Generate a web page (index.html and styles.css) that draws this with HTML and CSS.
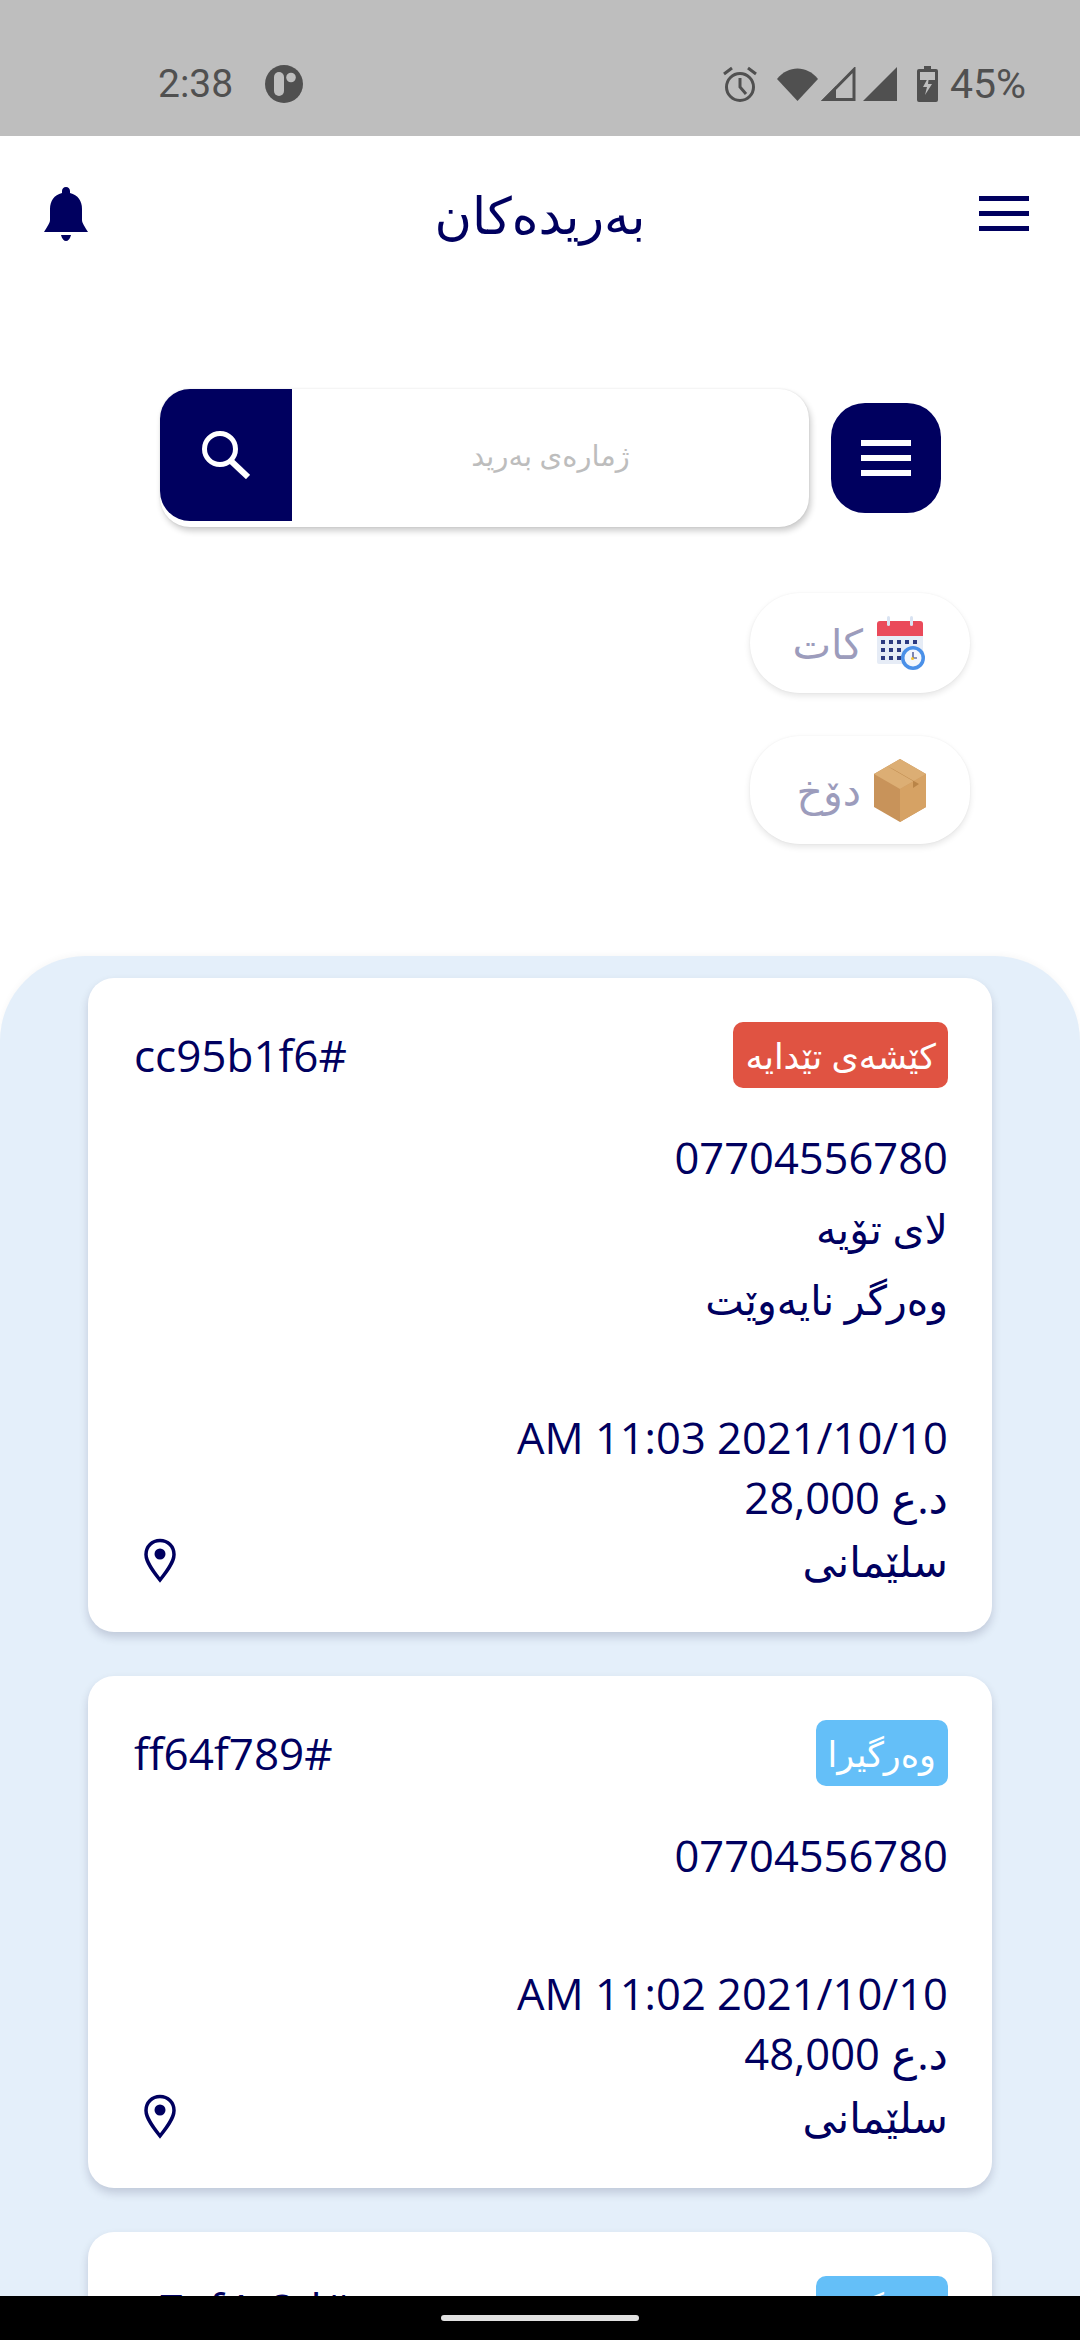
FILE: index.html
```html
<!DOCTYPE html>
<html lang="ckb" dir="rtl">

<head>
  <meta charset="UTF-8">
  <meta name="viewport" content="width=device-width, initial-scale=1.0">
  <title>بەریدەکان</title>
  <link rel="stylesheet" href="styles.css">
</head>

<body>

  <!-- android status bar, always laid out left to right -->
  <div class="status-bar" dir="ltr">
    <div class="status-left">
      <span>2:38</span>
      <svg class="status-logo" viewBox="0 0 38 38">
        <circle cx="19" cy="19" r="19" fill="#505050" />
        <rect x="9" y="7" width="10" height="24" rx="5" fill="#bebebe" />
        <circle cx="26" cy="12.5" r="4.8" fill="#bebebe" />
      </svg>
    </div>
    <div class="status-right">
      <svg class="icon-alarm" viewBox="0 0 34 36" fill="none" stroke="#505050" stroke-width="3">
        <circle cx="17" cy="21" r="13.5" />
        <path d="M17 12v9l6 7" />
        <path d="M1 8l8-6M33 8l-8-6" />
      </svg>
      <svg class="icon-wifi" viewBox="0 0 41 33">
        <path d="M0 11C11 -3 30 -3 41 11L20.500 33z" fill="#505050" />
      </svg>
      <svg class="icon-signal" viewBox="0 0 35 34">
        <path d="M33 2.500V32.500H3.500z" fill="none" stroke="#505050" stroke-width="3" />
        <path d="M0 34L15 19v15z" fill="#505050" />
      </svg>
      <svg class="icon-signal second" viewBox="0 0 35 34">
        <path d="M34 0V34H0z" fill="#505050" />
      </svg>
      <svg class="icon-battery" viewBox="0 0 21 36">
        <path d="M7 0h7v3h5a2 2 0 0 1 2 2v29a2 2 0 0 1-2 2H2a2 2 0 0 1-2-2V5a2 2 0 0 1 2-2h5z" fill="#505050" />
        <path d="M3 6h15v26H3z" fill="#bebebe" />
        <path d="M3 14h15v18H3z" fill="#505050" />
        <path d="M12 10L6 21h4l-2 8 7-11h-4z" fill="#bebebe" />
      </svg>
      <span class="battery-text">45%</span>
    </div>
  </div>

  <header class="top-bar">
    <svg class="menu-icon" viewBox="0 0 50 36" fill="#00005f">
      <rect width="50" height="5" />
      <rect y="15" width="50" height="5" />
      <rect y="30" width="50" height="5" />
    </svg>
    <h1>بەریدەکان</h1>
    <svg class="bell-icon" viewBox="0 0 44 54" fill="#00005f">
      <path d="M22 0c2.500 0 4 1.800 4 4v2c8 2 12 8 12 16v11c0 3 3 7 6 12H0c3-5 6-9 6-12V22C6 14 10 8 18 6V4c0-2.200 1.500-4 4-4z" />
      <path d="M17 48h10c-1 4-3 6-5 6s-4-2-5-6z" />
    </svg>
  </header>

  <section class="search-row">
    <button class="filter-button">
      <svg viewBox="0 0 50 36" fill="#ffffff">
        <rect width="50" height="6" />
        <rect y="15" width="50" height="6" />
        <rect y="30" width="50" height="6" />
      </svg>
    </button>
    <div class="search-box">
      <div class="search-input">ژمارەی بەرید</div>
      <div class="search-button">
        <svg viewBox="0 0 48 48" fill="none" stroke="#ffffff">
          <circle cx="18" cy="18" r="15.500" stroke-width="5" />
          <path d="M29 30l17 16" stroke-width="6" />
        </svg>
      </div>
    </div>
  </section>

  <section class="chips">
    <div class="chip">
      <svg class="chip-icon" viewBox="0 0 50 55">
        <rect x="1" y="8" width="46" height="40" rx="2" fill="#e6ecf6" />
        <path d="M1 20V8a3 3 0 0 1 3-3h40a3 3 0 0 1 3 3v12z" fill="#ea4a5a" />
        <rect x="11" y="0" width="3" height="10" rx="1.500" fill="#d9e3f2" />
        <rect x="34" y="0" width="3" height="10" rx="1.500" fill="#d9e3f2" />
        <g fill="#2c3a80">
          <rect x="5" y="24" width="4" height="4" />
          <rect x="13" y="24" width="4" height="4" />
          <rect x="21" y="24" width="4" height="4" />
          <rect x="29" y="24" width="4" height="4" />
          <rect x="37" y="24" width="4" height="4" />
          <rect x="5" y="32" width="4" height="4" />
          <rect x="13" y="32" width="4" height="4" />
          <rect x="21" y="32" width="4" height="4" />
          <rect x="5" y="40" width="4" height="4" />
          <rect x="13" y="40" width="4" height="4" />
          <rect x="21" y="40" width="4" height="4" />
        </g>
        <circle cx="37" cy="42" r="12" fill="#4a90e8" />
        <circle cx="37" cy="42" r="8.500" fill="#f3f7fd" />
        <path d="M37 36v6h4" fill="none" stroke="#2c3a80" stroke-width="1.200" />
        <circle cx="36.500" cy="42.500" r="1.500" fill="#f2c230" />
      </svg>
      <span>کات</span>
    </div>
    <div class="chip">
      <svg class="chip-icon" viewBox="0 0 52 63">
        <path d="M26 0l26 15v33L26 63 0 48V15z" fill="#c8935a" />
        <path d="M26 63V30l26-15v33z" fill="#d6a264" />
        <path d="M26 0l26 15-26 15L0 15z" fill="#dcae74" />
        <path d="M13 7l26 15 0 7 6-4-26-15z" fill="#b98447" />
      </svg>
      <span>دۆخ</span>
    </div>
  </section>

  <main class="orders">

    <article class="order-card">
      <div class="card-top">
        <span class="badge badge-red">کێشەی تێدایە</span>
        <span class="order-id">#cc95b1f6</span>
      </div>
      <div class="line phone">07704556780</div>
      <div class="line note">لای تۆیە</div>
      <div class="line note">وەرگر نایەوێت</div>
      <div class="line-sm date">2021/10/10 11:03 AM</div>
      <div class="line-sm">د.ع 28,000</div>
      <div class="city-row">
        <span>سلێمانی</span>
        <svg class="pin" viewBox="0 0 32 45">
          <path d="M16 2.500C8 2.500 2 8.500 2 16.500c0 8 8 18 14 25.500 6-7.500 14-17.500 14-25.500 0-8-6-14-14-14z" fill="none" stroke="#00005f" stroke-width="3.500" />
          <circle cx="16" cy="16" r="5.500" fill="#00005f" />
        </svg>
      </div>
    </article>

    <article class="order-card">
      <div class="card-top">
        <span class="badge badge-blue">وەرگیرا</span>
        <span class="order-id">#ff64f789</span>
      </div>
      <div class="line phone">07704556780</div>
      <div class="line-sm date">2021/10/10 11:02 AM</div>
      <div class="line-sm">د.ع 48,000</div>
      <div class="city-row">
        <span>سلێمانی</span>
        <svg class="pin" viewBox="0 0 32 45">
          <path d="M16 2.500C8 2.500 2 8.500 2 16.500c0 8 8 18 14 25.500 6-7.500 14-17.500 14-25.500 0-8-6-14-14-14z" fill="none" stroke="#00005f" stroke-width="3.500" />
          <circle cx="16" cy="16" r="5.500" fill="#00005f" />
        </svg>
      </div>
    </article>

    <article class="order-card">
      <div class="card-top">
        <span class="badge badge-blue">وەرگیرا</span>
        <span class="order-id">#e7ef4c8d</span>
      </div>
    </article>

  </main>

  <div class="nav-bar">
    <div class="home-pill"></div>
  </div>

</body>

</html>
```

FILE: styles.css
```css
* {
  box-sizing: border-box;
}

body {
  margin: 0;
  height: 2340px;
  overflow: hidden;
  display: flex;
  flex-direction: column;
  font-family: 'Open Sans', 'DejaVu Sans', sans-serif;
  color: #00005f;
  background: #ffffff;
}

svg {
  display: block;
  flex: none;
}

/* status bar */

.status-bar {
  height: 136px;
  flex: none;
  padding: 32px 54px 0 158px;
  display: flex;
  justify-content: space-between;
  align-items: center;
  background: #bebebe;
  color: #505050;
  font-family: 'Roboto', sans-serif;
  font-size: 39px;
}

.status-left,
.status-right {
  display: flex;
  align-items: center;
}

.status-logo {
  width: 38px;
  height: 38px;
  margin-left: 32px;
}

.icon-alarm {
  width: 34px;
  height: 36px;
}

.icon-wifi {
  width: 41px;
  height: 33px;
  margin-left: 20px;
}

.icon-signal {
  width: 35px;
  height: 34px;
  margin-left: 3px;
}

.icon-signal.second {
  margin-left: 7px;
}

.icon-battery {
  width: 21px;
  height: 36px;
  margin-left: 19px;
}

.battery-text {
  margin-left: 12px;
  font-size: 41px;
}

/* header */

.top-bar {
  height: 156px;
  flex: none;
  padding: 0 44px;
  display: grid;
  grid-template-columns: 1fr auto 1fr;
  align-items: center;
}

.top-bar h1 {
  margin: 0;
  font-size: 51px;
  font-weight: 400;
}

.menu-icon {
  width: 50px;
  height: 36px;
  margin-right: 7px;
  justify-self: start;
}

.bell-icon {
  width: 44px;
  height: 54px;
  justify-self: end;
}

/* search */

.search-row {
  margin-top: 97px;
  padding-right: 139px;
  display: flex;
  align-items: center;
  gap: 22px;
}

.filter-button {
  width: 110px;
  height: 110px;
  padding: 0;
  border: none;
  border-radius: 34px;
  display: flex;
  justify-content: center;
  align-items: center;
  background: #00005f;
}

.filter-button svg {
  width: 50px;
  height: 36px;
}

.search-box {
  width: 649px;
  height: 138px;
  padding-bottom: 6px;
  display: flex;
  border-radius: 30px;
  background: #ffffff;
  box-shadow: 2px 4px 6px rgba(0, 0, 0, 0.2), 0 0 2px rgba(0, 0, 0, 0.1);
}

.search-input {
  flex: 1;
  display: flex;
  justify-content: center;
  align-items: center;
  padding-bottom: 2px;
  color: #bdbdbd;
  font-size: 29px;
}

.search-button {
  width: 132px;
  height: 132px;
  display: flex;
  justify-content: center;
  align-items: center;
  border-radius: 30px 0 0 30px;
  background: #00005f;
}

.search-button svg {
  width: 48px;
  height: 48px;
}

/* filter chips */

.chips {
  margin-top: 66px;
  padding-right: 110px;
  display: flex;
  flex-direction: column;
  align-items: flex-start;
  gap: 43px;
}

.chip {
  width: 220px;
  height: 100px;
  padding: 0 44px;
  display: flex;
  align-items: center;
  gap: 13px;
  border-radius: 50px;
  background: #ffffff;
  box-shadow: 0 3px 6px rgba(0, 0, 0, 0.1), 0 0 2px rgba(0, 0, 0, 0.05);
  color: #9c9cbc;
  font-size: 41px;
}

.chip + .chip {
  height: 108px;
}

.chip-icon {
  width: 50px;
  height: 55px;
}

.chip + .chip .chip-icon {
  width: 52px;
  height: 63px;
}

/* orders */

.orders {
  flex: 1;
  margin-top: 112px;
  padding: 22px 88px 0;
  display: flex;
  flex-direction: column;
  gap: 44px;
  overflow: hidden;
  border-radius: 85px 85px 0 0;
  background: #e4effa;
  box-shadow: 0 -2px 6px rgba(0, 0, 0, 0.03);
}

.order-card {
  flex: none;
  padding: 44px 44px 39px;
  border-radius: 26px;
  background: #ffffff;
  box-shadow: 0 5px 10px rgba(0, 0, 50, 0.16);
  font-size: 43.500px;
}

.card-top {
  display: flex;
  justify-content: space-between;
  align-items: center;
}

.badge {
  height: 66px;
  padding: 0 12px;
  display: flex;
  align-items: center;
  border-radius: 10px;
  color: #ffffff;
  font-size: 35px;
}

.badge-red {
  background: #e05342;
}

.badge-blue {
  background: #64bff8;
}

.order-id {
  margin-left: 2px;
  font-size: 44px;
}

.line {
  height: 71px;
  line-height: 71px;
}

.note {
  font-size: 41px;
}

.phone {
  margin-top: 34px;
}

.line-sm {
  height: 60px;
  line-height: 60px;
}

.date {
  margin-top: 73px;
}

.city-row {
  height: 65px;
  padding-left: 12px;
  display: flex;
  justify-content: space-between;
  align-items: center;
  font-size: 42px;
}

.pin {
  width: 32px;
  height: 45px;
}

/* android nav bar */

.nav-bar {
  height: 44px;
  flex: none;
  display: flex;
  justify-content: center;
  align-items: center;
  background: #000000;
}

.home-pill {
  width: 198px;
  height: 6px;
  border-radius: 3px;
  background: #e0e0e0;
}
```
